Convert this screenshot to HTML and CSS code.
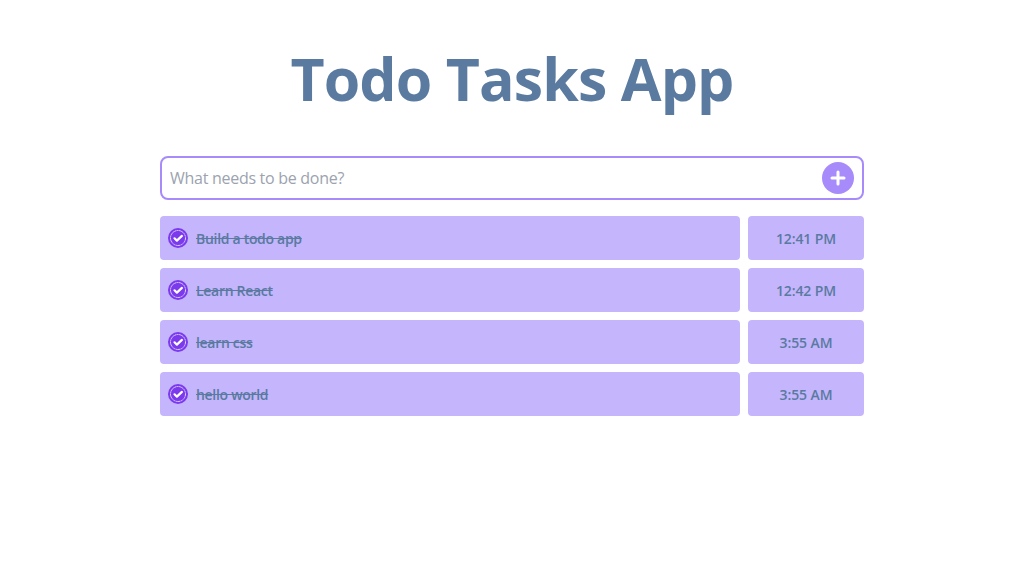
FILE: index.html
```html
<!DOCTYPE html>
<html>
<head>
	<title>Todo Tasks App</title>
	<link rel="stylesheet" href="styles.css">
</head>
<body>
	<div class="app">
		<h1 class="title">Todo Tasks App</h1>
		<div class="add-box">
			<input class="add-input" type="text" placeholder="What needs to be done?">
			<button class="add-btn">
				<svg width="16" height="16" viewBox="0 0 16 16"><path d="M8 2v12M2 8h12" stroke="#fff" stroke-width="3" stroke-linecap="round"/></svg>
			</button>
		</div>
		<ul class="tasks">
			<li class="task">
				<div class="task-main">
					<svg class="check" width="20" height="20" viewBox="0 0 20 20"><circle cx="10" cy="10" r="10" fill="#7c3aed"/><circle cx="10" cy="10" r="7.5" fill="#7c3aed" stroke="#e0d4fd" stroke-width="1" stroke-dasharray="2 .4"/><path d="M6.5 10.3l2.4 2.3 5-4.7" fill="none" stroke="#fff" stroke-width="2.2" stroke-linecap="round" stroke-linejoin="round"/></svg>
					<span class="task-name">Build a todo app</span>
				</div>
				<div class="task-time">12:41 PM</div>
			</li>
			<li class="task">
				<div class="task-main">
					<svg class="check" width="20" height="20" viewBox="0 0 20 20"><circle cx="10" cy="10" r="10" fill="#7c3aed"/><circle cx="10" cy="10" r="7.5" fill="#7c3aed" stroke="#e0d4fd" stroke-width="1" stroke-dasharray="2 .4"/><path d="M6.5 10.3l2.4 2.3 5-4.7" fill="none" stroke="#fff" stroke-width="2.2" stroke-linecap="round" stroke-linejoin="round"/></svg>
					<span class="task-name">Learn React</span>
				</div>
				<div class="task-time">12:42 PM</div>
			</li>
			<li class="task">
				<div class="task-main">
					<svg class="check" width="20" height="20" viewBox="0 0 20 20"><circle cx="10" cy="10" r="10" fill="#7c3aed"/><circle cx="10" cy="10" r="7.5" fill="#7c3aed" stroke="#e0d4fd" stroke-width="1" stroke-dasharray="2 .4"/><path d="M6.5 10.3l2.4 2.3 5-4.7" fill="none" stroke="#fff" stroke-width="2.2" stroke-linecap="round" stroke-linejoin="round"/></svg>
					<span class="task-name">learn css</span>
				</div>
				<div class="task-time">3:55 AM</div>
			</li>
			<li class="task">
				<div class="task-main">
					<svg class="check" width="20" height="20" viewBox="0 0 20 20"><circle cx="10" cy="10" r="10" fill="#7c3aed"/><circle cx="10" cy="10" r="7.5" fill="#7c3aed" stroke="#e0d4fd" stroke-width="1" stroke-dasharray="2 .4"/><path d="M6.5 10.3l2.4 2.3 5-4.7" fill="none" stroke="#fff" stroke-width="2.2" stroke-linecap="round" stroke-linejoin="round"/></svg>
					<span class="task-name">hello world</span>
				</div>
				<div class="task-time">3:55 AM</div>
			</li>
		</ul>
	</div>
</body>
</html>
```

FILE: styles.css
```css
* {
	box-sizing: border-box;
}

body {
	margin: 0;
	background: #fff;
	font-family: "Open Sans", "Noto Sans", sans-serif;
	color: #5a7aa0;
}

.app {
	width: 704px;
	margin: 0 auto;
	padding-top: 32px;
}

.title {
	margin: 0 0 32px;
	height: 92px;
	line-height: 92px;
	font-size: 59px;
	font-weight: 700;
	letter-spacing: -0.9px;
	text-align: center;
}

.add-box {
	display: flex;
	align-items: center;
	height: 44px;
	padding: 0 8px;
	border: 2px solid #a78bfa;
	border-radius: 8px;
}

.add-input {
	flex: 1;
	border: none;
	outline: none;
	padding: 0;
	font-family: inherit;
	font-size: 16px;
	letter-spacing: -0.28px;
	color: #5a7aa0;
}

.add-input::placeholder {
	color: #9ca3af;
	opacity: 1;
}

.add-btn {
	display: flex;
	align-items: center;
	justify-content: center;
	width: 32px;
	height: 32px;
	padding: 0;
	border: none;
	border-radius: 50%;
	background: #a78bfa;
}

.tasks {
	list-style: none;
	margin: 16px 0 0;
	padding: 0;
	display: flex;
	flex-direction: column;
	gap: 8px;
}

.task {
	display: flex;
	gap: 8px;
	height: 44px;
}

.task-main {
	flex: 1;
	display: flex;
	align-items: center;
	gap: 8px;
	padding: 0 8px;
	background: #c4b5fd;
	border-radius: 4px;
}

.task-name {
	font-size: 14px;
	font-weight: 600;
	letter-spacing: -0.3px;
	text-decoration: line-through;
}

.task-time {
	width: 116px;
	display: flex;
	align-items: center;
	justify-content: center;
	background: #c4b5fd;
	border-radius: 4px;
	font-size: 14px;
	font-weight: 600;
	letter-spacing: -0.1px;
}
```
